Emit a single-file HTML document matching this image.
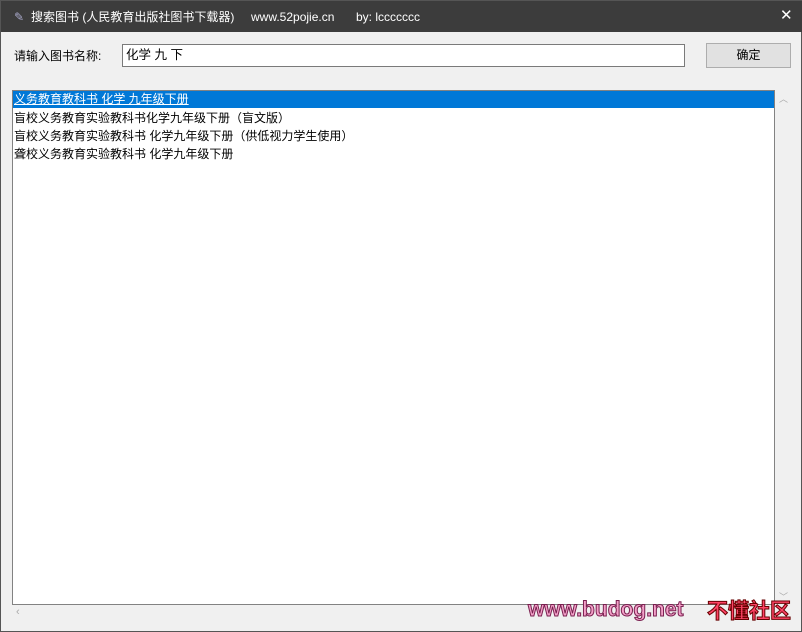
<!DOCTYPE html>
<html><head><meta charset="utf-8"><style>
*{margin:0;padding:0;box-sizing:border-box}
body{width:802px;height:632px;background:#f0f0f0;font-family:"Liberation Sans","Noto Sans CJK SC",sans-serif;font-size:12px;color:#000;position:relative;overflow:hidden;border:1px solid #555}
.title{position:absolute;left:0;top:0;width:802px;height:31px;background:#3c3c3c;color:#fff;font-size:12px}
.title span{position:absolute;top:7px;height:18px;line-height:18px;white-space:nowrap}
.lbl{position:absolute;left:13px;top:46px;line-height:18px}
.inp{position:absolute;left:121px;top:43px;width:563px;height:23px;background:#fff;border:1px solid #7a7a7a;padding:0 3px;font-size:12.5px;line-height:21px}
.btn{position:absolute;left:705px;top:42px;width:85px;height:25px;background:#e1e1e1;border:1px solid #adadad;text-align:center;line-height:23px}
.list{position:absolute;left:11px;top:89px;width:763px;height:515px;background:#fff;border:1px solid #828282}
.row{height:18px;line-height:18px;padding-left:1px;white-space:nowrap}
.sel{background:#0078d7;color:#fff;text-decoration:underline;height:17px;line-height:17px;margin-bottom:1px}
.vs{position:absolute;left:774px;top:89px;width:17px;height:515px;background:#f0f0f0}
.hs{position:absolute;left:11px;top:604px;width:763px;height:17px;background:#f0f0f0}
.wm{position:absolute;left:527px;top:597px;font-size:21px;font-weight:bold;color:#f3a0c8;-webkit-text-stroke:1px #7a2050}
.wm2{position:absolute;left:706px;top:594px;font-size:21px;font-weight:bold;color:#ff4466;-webkit-text-stroke:1px #600;font-family:"Noto Sans CJK SC",sans-serif;line-height:30px}
</style></head><body>
<div class="title">
<span style="left:13px;color:#aac">✎</span>
<span style="left:30px">搜索图书 (人民教育出版社图书下载器)</span>
<span style="left:250px">www.52pojie.cn</span>
<span style="left:355px">by: lccccccc</span>
<span style="left:779px;top:6px;font-size:15px">✕</span>
</div>
<div class="lbl">请输入图书名称:</div>
<div class="inp">化学 九 下</div>
<div class="btn">确定</div>
<div class="list">
<div class="row sel">义务教育教科书 化学 九年级下册</div>
<div class="row">盲校义务教育实验教科书化学九年级下册（盲文版）</div>
<div class="row">盲校义务教育实验教科书 化学九年级下册（供低视力学生使用）</div>
<div class="row">聋校义务教育实验教科书 化学九年级下册</div>
</div>
<div class="vs"><span style="position:absolute;left:4px;top:2px;color:#aaa;font-size:9px">︿</span><span style="position:absolute;left:4px;bottom:2px;color:#aaa;font-size:9px">﹀</span></div>
<div class="hs"><span style="position:absolute;left:4px;top:1px;color:#aaa;font-size:11px">‹</span></div>
<div class="wm">www.budog.net</div>
<div class="wm2">不懂社区</div>
</body></html>
